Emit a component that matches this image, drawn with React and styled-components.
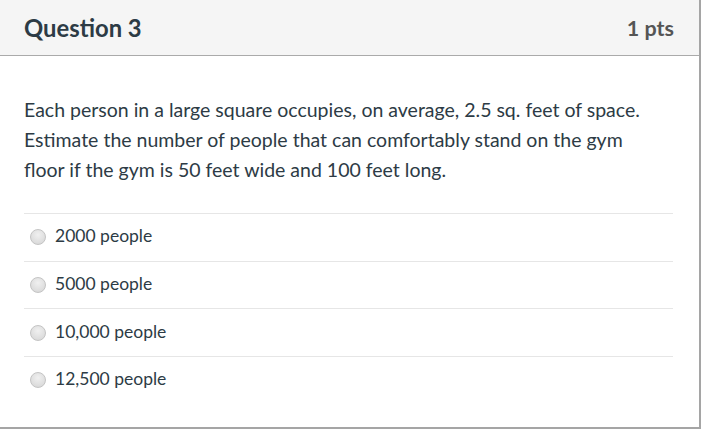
import React from "react";
import styled, { createGlobalStyle } from "styled-components";

const GlobalStyle = createGlobalStyle`
  html, body {
    margin: 0;
    padding: 0;
    background: #ffffff;
  }
  body {
    font-family: Lato, "Open Sans", sans-serif;
    color: #2d3b45;
  }
`;

const QuestionBox = styled.div`
  width: 701px;
  height: 429px;
  box-sizing: border-box;
  border-right: 2px solid #a5a5a5;
  border-bottom: 2px solid #a5a5a5;
  background: #ffffff;
  display: flex;
  flex-direction: column;
`;

const Header = styled.div`
  height: 56px;
  box-sizing: border-box;
  background: #f5f5f5;
  border-bottom: 1px solid #aaaaaa;
  display: flex;
  align-items: center;
  justify-content: space-between;
  padding: 0 25px 0 24px;
`;

const Title = styled.h2`
  margin: 0;
  font-size: 23.8px;
  font-weight: 700;
  color: #2d3b45;
`;

const Points = styled.div`
  font-size: 21.5px;
  font-weight: 700;
  color: #555555;
`;

const Body = styled.div`
  padding: 39px 20px 0 24px;
`;

const Prompt = styled.p`
  margin: 0 0 28px;
  max-width: 640px;
  font-size: 19.5px;
  line-height: 30px;
  color: #2d3b45;
`;

const Answers = styled.div`
  display: flex;
  flex-direction: column;
  margin-right: 6px;
`;

const Answer = styled.label`
  display: flex;
  align-items: center;
  gap: 9px;
  height: 47.7px;
  box-sizing: border-box;
  border-top: 1px solid #e6e6e6;
  padding: 0 0 3px 6px;
  font-size: 17.5px;
  color: #2d3b45;
`;

const Radio = styled.span`
  width: 14px;
  height: 14px;
  margin-top: 3px;
  border-radius: 50%;
  border: 1px solid #c4c4c4;
  background: radial-gradient(circle at 50% 35%, #f0f0f0, #d4d4d4);
  flex-shrink: 0;
`;

const answers = ["2000 people", "5000 people", "10,000 people", "12,500 people"];

export default function App() {
  return (
    <>
      <GlobalStyle />
      <QuestionBox>
        <Header>
          <Title>Question 3</Title>
          <Points>1 pts</Points>
        </Header>
        <Body>
          <Prompt>
            Each person in a large square occupies, on average, 2.5 sq. feet of space.
            Estimate the number of people that can comfortably stand on the gym floor if
            the gym is 50 feet wide and 100 feet long.
          </Prompt>
          <Answers>
            {answers.map((a) => (
              <Answer key={a}>
                <Radio />
                {a}
              </Answer>
            ))}
          </Answers>
        </Body>
      </QuestionBox>
    </>
  );
}
